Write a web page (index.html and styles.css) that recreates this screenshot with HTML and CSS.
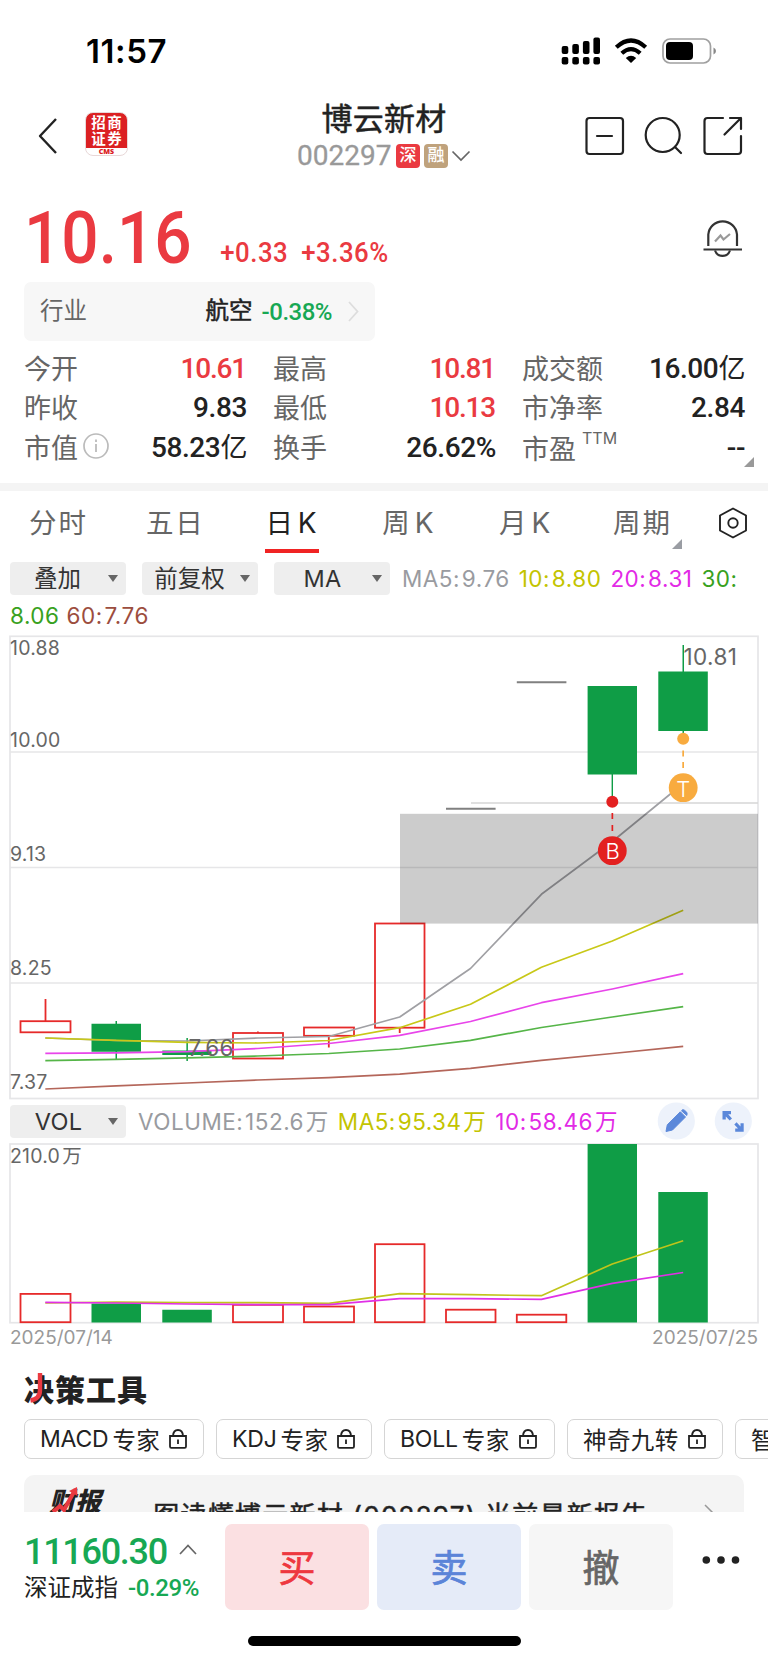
FILE: index.html
```html
<!DOCTYPE html>
<html lang="zh-CN">
<head>
<meta charset="utf-8">
<title>博云新材 002297</title>
<link rel="stylesheet" href="styles.css">
</head>
<body>
<div class="status">
  <span class="time">11:57</span>
  <svg class="status-icons" width="160" height="32" viewBox="558 34 160 32">
    <g fill="#000">
      <rect x="561.7" y="46" width="6.6" height="8" rx="2"/><rect x="572.3" y="44" width="6.6" height="10" rx="2"/><rect x="582.9" y="41" width="6.6" height="13" rx="2"/><rect x="593.4" y="37.500" width="6.600" height="16.500" rx="2"/>
      <rect x="561.7" y="57" width="6.6" height="7.500" rx="2"/><rect x="572.3" y="57" width="6.600" height="7.500" rx="2"/><rect x="582.9" y="57" width="6.600" height="7.500" rx="2"/><rect x="593.4" y="57" width="6.600" height="7.500" rx="2"/>
      <path d="M631 63L625.800 58Q631 53.500 636.200 58Z"/>
    </g>
    <g fill="none" stroke="#000" stroke-width="4.200"><path d="M616.300 47.300Q631 33.800 645.700 47.300"/><path d="M621.800 53.200Q631 45 640.200 53.200"/></g>
    <rect x="663" y="39" width="47.500" height="24" rx="7" fill="none" stroke="#a0a0a0" stroke-width="1.700"/>
    <rect x="666" y="42" width="27" height="18" rx="4"/>
    <path d="M713.500 47.500Q716 48.500 716 51T713.500 54.500Z" fill="#888"/>
  </svg>
</div>
<header class="header">
  <svg class="back" width="20" height="38" viewBox="0 0 20 38"><path d="M19 2L3 19L19 36" fill="none" stroke="#222" stroke-width="2.400" stroke-linejoin="round"/></svg>
  <div class="broker"><span>招商</span><span>证券</span><b>CMS</b></div>
  <div class="title">
    <h1>博云新材</h1>
    <div class="sub"><span class="code">002297</span><i class="badge red-bg">深</i><i class="badge tan-bg">融</i><svg width="20" height="12" viewBox="0 0 20 12"><path d="M1.500 1.500L10 10L18.500 1.500" fill="none" stroke="#666" stroke-width="1.700"/></svg></div>
  </div>
  <svg class="tools" width="160" height="42" viewBox="584 115 160 42" fill="none" stroke="#222" stroke-width="2.200" stroke-linecap="round" stroke-linejoin="round">
    <rect x="586.500" y="118" width="36.500" height="36" rx="3"/><path d="M597 136H612"/>
    <circle cx="662.700" cy="135" r="17"/><path d="M675 147L681 153"/>
    <path d="M723 118H707.500Q704.500 118 704.500 121V151Q704.500 154 707.500 154H738Q741 154 741 151V136M730 118H741V129M741 118L724.500 134.500"/>
  </svg>
</header>
<section class="quote">
  <div class="price-row">
    <span class="price">10.16</span><span class="chg">+0.33</span><span class="chg pct">+3.36%</span>
    <svg class="bell" width="40" height="42" viewBox="703 217 40 42" fill="none" stroke="#333" stroke-width="2.200"><path d="M708.300 245V233.500A14.400 14.400 0 0 1 737 233.500V245"/><path d="M703.500 248.500H742"/><path d="M715 249.500A7.900 7.900 0 0 0 730 249.500"/><path d="M715 240.500L720.500 234.500L723.500 238.500L730 233" stroke="#999" stroke-width="2.200"/></svg>
  </div>
  <div class="industry"><span>行业</span><b>航空</b><em>-0.38%</em><svg width="11" height="21" viewBox="0 0 11 21"><path d="M1 1L9.500 10.500L1 20" fill="none" stroke="#ddd" stroke-width="1.800"/></svg></div>
  <div class="stats">
    <div><span>今开</span><b class="red">10.61</b></div><div><span>最高</span><b class="red">10.81</b></div><div><span>成交额</span><b>16.00<i>亿</i></b></div>
    <div><span>昨收</span><b>9.83</b></div><div><span>最低</span><b class="red">10.13</b></div><div><span>市净率</span><b>2.84</b></div>
    <div><span class="with-info">市值<svg width="28" height="28" viewBox="0 0 28 28" fill="none" stroke="#bbb"><circle cx="14" cy="14" r="12" stroke-width="1.700"/><path d="M14 12V20M14 7.500V10" stroke-width="1.800"/></svg></span><b>58.23<i>亿</i></b></div><div><span>换手</span><b>26.62%</b></div><div><span class="pe">市盈<sup>TTM</sup></span><b>--</b></div>
    <svg class="corner" width="10" height="10"><path d="M10 0V10H0Z" fill="#999"/></svg>
  </div>
</section>
<nav class="tabs">
  <span>分时</span><span>五日</span><span class="on">日<i>K</i></span><span>周<i>K</i></span><span>月<i>K</i></span><span>周期<svg width="10" height="10"><path d="M10 0V10H0Z" fill="#9a9da3"/></svg></span>
  <svg class="gear" width="32" height="34" viewBox="0 0 32 34" fill="none" stroke="#222" stroke-width="1.900" stroke-linejoin="round"><path d="M16 2.500L29 9.500V24.500L16 31.500L3 24.500V9.500Z"/><circle cx="16" cy="17" r="4.700"/></svg>
</nav>
<div class="indicators">
  <button class="drop"><span>叠加</span></button><button class="drop"><span>前复权</span></button><button class="drop"><span class="lat">MA</span></button>
  <p><span class="c5">MA5: 9.76</span><span class="c10">10: 8.80</span><span class="c20">20: 8.31</span><span class="c30">30:</span></p>
</div>
<p class="indicators-2"><span class="c30">8.06</span><span class="c60">60: 7.76</span></p>
<svg class="chart" width="768" height="470" viewBox="0 630 768 470">
  <g fill="none" stroke="#e6e6e8" stroke-width="1.700"><rect x="10" y="636.300" width="748" height="462.200"/><path d="M10 752H758M10 867.500H758M10 983H758"/></g>
  <g class="axis"><text x="10" y="655">10.88</text><text x="10" y="747">10.00</text><text x="10" y="860.500">9.13</text><text x="10" y="975">8.25</text><text x="10" y="1089">7.37</text></g>
  <g fill="none" stroke="#e62a2a" stroke-width="1.800">
    <path d="M45.500 999V1021M328.800 1036V1047.500M399.700 1028V1033M257.900 1031.500V1033"/>
    <rect x="20.500" y="1021.200" width="50" height="11.100"/><rect x="233" y="1033" width="50" height="25.500"/><rect x="304" y="1027.500" width="50" height="8.300"/><rect x="375" y="923.500" width="49.500" height="104.200"/>
  </g>
  <g fill="#0f9d46"><path d="M91.500 1023.800H141V1051.800H91.500ZM115.500 1021H117V1059H115.500ZM162.300 1050.500H211.500V1055H162.300ZM186.400 1038H187.900V1061H186.400ZM587.600 686H637V774.500H587.600ZM611.600 774H613V797H611.600ZM658.300 671.600H707.800V731H658.300ZM682.500 645H684V735H682.500Z"/></g>
  <path d="M446 808.800H495.600M516.800 682.300H566.400" stroke="#808080" stroke-width="2"/>
  <path d="M471 803H758" stroke="#d6d6d6" stroke-width="1.700"/>
  <g fill="none" stroke-width="1.700" stroke-linejoin="round">
    <polyline stroke="#a0a0a4" points="45.300,1038 116.200,1040.500 187.100,1041 257.900,1038 328.800,1036.500 399.700,1017 470.500,968.500 541.400,894.300 612.300,841.500 683.200,783.500"/>
    <polyline stroke="#c8c818" points="45.300,1038 116.200,1040.300 187.100,1042.300 257.900,1043 328.800,1040.500 399.700,1027.700 470.500,1004.300 541.400,967.300 612.300,941 683.200,910.200"/>
    <polyline stroke="#e845ea" points="45.300,1053.400 116.200,1052.800 187.100,1051.700 257.900,1048.500 328.800,1043.500 399.700,1035.300 470.500,1021.500 541.400,1002.700 612.300,989 683.200,973.700"/>
    <polyline stroke="#55b548" points="45.300,1060.700 116.200,1059.300 187.100,1057.800 257.900,1056 328.800,1053.500 399.700,1049 470.500,1040.300 541.400,1027.500 612.300,1017 683.200,1006.700"/>
    <polyline stroke="#b4665a" points="45.300,1089 116.200,1085.800 187.100,1083 257.900,1080 328.800,1077.700 399.700,1074.200 470.500,1068.300 541.400,1060.300 612.300,1053.500 683.200,1046.300"/>
  </g>
  <rect x="400" y="813.800" width="358" height="109.800" fill="#000" fill-opacity=".2"/>
  <g class="tag"><text x="683.500" y="664.500">10.81</text><text x="188.500" y="1055.500">7.66</text></g>
  <g fill="#e32020"><circle cx="612.300" cy="801.700" r="6"/><circle cx="612.300" cy="850.700" r="14.400"/><path d="M611.500 813H613.200V819H611.500ZM611.500 825H613.200V831H611.500Z"/></g>
  <g fill="#f8ab3f"><circle cx="683.200" cy="738.800" r="6"/><circle cx="683.200" cy="787.700" r="14.400"/><path d="M682.300 750.500H684V756.500H682.300ZM682.300 762H684V768H682.300Z"/></g>
  <g class="mark"><text x="612.600" y="859">B</text><text x="683.200" y="796.500">T</text></g>
</svg>
<div class="indicators vol">
  <button class="drop"><span class="lat">VOL</span></button>
  <p><span class="c5">VOLUME: 152.6 万</span><span class="c10">MA5: 95.34 万</span><span class="c20">10: 58.46 万</span></p>
  <svg class="vol-tools" width="96" height="38" viewBox="657 1102 96 38"><g fill="#edf2fb"><circle cx="676.300" cy="1121" r="18.600"/><circle cx="733.300" cy="1121" r="18.600"/></g>
    <g fill="#5b88da"><path d="M666 1131.500L667.300 1124.800L680.300 1111.800L685.500 1117L672.500 1130ZM681.500 1110.800L682.800 1109.600Q684.200 1109.600 686.700 1112.200Q687.500 1113.500 686.800 1115.500Z" stroke="#5b88da" stroke-width="1" stroke-linejoin="round"/><path d="M722.500 1111H731V1114.200H728.200L732 1118.500L729.700 1120.600L725.800 1116.500V1119.500H722.500ZM743.700 1131.800H735.200V1128.600H738L734.300 1124.400L736.600 1122.300L740.500 1126.400V1123.300H743.700Z"/></g></svg>
</div>
<svg class="chart" width="768" height="186" viewBox="0 1140 768 186">
  <rect x="10" y="1144" width="748" height="178.700" fill="none" stroke="#e6e6e8" stroke-width="1.700"/>
  <g class="axis"><text class="tight" x="10" y="1162.500">210.0 万</text></g>
  <g fill="none" stroke="#e62a2a" stroke-width="1.800"><rect x="20.500" y="1293.900" width="50" height="28.300"/><rect x="233" y="1304.800" width="50" height="17.400"/><rect x="304" y="1306.500" width="50" height="15.700"/><rect x="375" y="1244.200" width="49.500" height="78"/><rect x="446" y="1309.700" width="49.500" height="12.500"/><rect x="516.800" y="1314.700" width="49.500" height="7.500"/></g>
  <path d="M91.500 1303.500H141V1322.500H91.500ZM162.300 1309.800H211.800V1322.500H162.300ZM587.600 1144H637V1322.500H587.600ZM658.300 1192H707.800V1322.500H658.300Z" fill="#0f9d46"/>
  <g fill="none" stroke-width="1.700" stroke-linejoin="round">
    <polyline stroke="#c0c51b" points="45.300,1303 116.200,1302 187.100,1302.700 257.900,1302.700 328.800,1303.300 399.700,1293.700 470.500,1294.700 541.400,1295.700 612.300,1264 683.200,1240.700"/>
    <polyline stroke="#e030e6" points="45.300,1302.400 116.200,1303 187.100,1304 257.900,1304.700 328.800,1304.700 399.700,1298.700 470.500,1298.700 541.400,1299.300 612.300,1283.300 683.200,1272.500"/>
  </g>
</svg>
<div class="dates"><span>2025/07/14</span><span>2025/07/25</span></div>
<section class="decision">
  <h2>决策工具<svg width="20" height="32" viewBox="0 0 20 32"><path d="M10 1V18Q10 27 0.500 28.500" fill="none" stroke="#ea3a41" stroke-width="4.400"/></svg></h2>
  <div class="chips">
    <span class="chip w1"><i>MACD</i>专家<svg class="lock" viewBox="0 0 18 20"><path d="M1 7H17V17.500Q17 18.800 15.700 18.800H2.300Q1 18.800 1 17.500ZM4 7Q4.300 1 9 1T14 7M9 10.500V15"/></svg></span>
    <span class="chip w2"><i>KDJ</i>专家<svg class="lock" viewBox="0 0 18 20"><path d="M1 7H17V17.500Q17 18.800 15.700 18.800H2.300Q1 18.800 1 17.500ZM4 7Q4.300 1 9 1T14 7M9 10.500V15"/></svg></span>
    <span class="chip w3"><i>BOLL</i>专家<svg class="lock" viewBox="0 0 18 20"><path d="M1 7H17V17.500Q17 18.800 15.700 18.800H2.300Q1 18.800 1 17.500ZM4 7Q4.300 1 9 1T14 7M9 10.500V15"/></svg></span>
    <span class="chip w4">神奇九转<svg class="lock" viewBox="0 0 18 20"><path d="M1 7H17V17.500Q17 18.800 15.700 18.800H2.300Q1 18.800 1 17.500ZM4 7Q4.300 1 9 1T14 7M9 10.500V15"/></svg></span>
    <span class="chip w5">智</span>
  </div>
  <div class="report">
    <div class="report-logo">财报<svg width="28" height="28" viewBox="0 0 28 28"><path d="M2 25L9 19L13 23L24 3" fill="none" stroke="#ea3a41" stroke-width="4"/><path d="M18 4L26 0L26.500 9Z" fill="#ea3a41"/></svg></div>
    <p>一图读懂博云新材 (002297) 当前最新报告</p>
    <svg width="10" height="18" viewBox="0 0 10 18"><path d="M1 1L9 9L1 17" fill="none" stroke="#999" stroke-width="1.500"/></svg>
  </div>
</section>
<footer class="bar">
  <div class="index">
    <div class="index-top"><span>11160.30</span><svg width="18" height="11" viewBox="0 0 18 11"><path d="M1 10L9 1.500L17 10" fill="none" stroke="#666" stroke-width="1.700"/></svg></div>
    <div class="index-sub">深证成指<em>-0.29%</em></div>
  </div>
  <button class="act buy">买</button><button class="act sell">卖</button><button class="act cancel">撤</button>
  <svg class="more" width="38" height="10" viewBox="0 0 38 10" fill="#222"><circle cx="4.300" cy="5" r="3.800"/><circle cx="19" cy="5" r="3.800"/><circle cx="33.500" cy="5" r="3.800"/></svg>
</footer>
<div class="home"></div>
</body>
</html>
```
FILE: styles.css
```css
* { box-sizing: border-box; }
body { margin: 0; width: 768px; height: 1663px; overflow: hidden; background: #fff; color: #222; font-family: "Inter", "Noto Sans CJK SC", sans-serif; display: flex; flex-direction: column; }
body > * { flex: none; }
h1, h2, p { margin: 0; }
i, em { font-style: normal; }
svg { display: block; flex: none; }
button { border: 0; margin: 0; padding: 0; }
.red { color: #ea3a41; }

.status { height: 100px; display: flex; justify-content: space-between; padding: 34px 50px 0 86px; }
.time { font-weight: 600; font-size: 33px; line-height: 34px; color: #000; letter-spacing: 0.6px; }

.header { height: 96px; display: flex; align-items: flex-start; padding-left: 37px; }
.back { margin-top: 17px; }
.broker { margin: 12px 0 0 28px; width: 43px; height: 44px; border-radius: 8px; border: 1px solid #e8d8d8; background: linear-gradient(#db2022 0 35px, #fff 35px); color: #fff; display: flex; flex-direction: column; align-items: center; padding-top: 2px; font-weight: 700; }
.broker span { font-size: 14.500px; line-height: 16px; letter-spacing: 1.500px; margin-right: -1.500px; }
.broker b { color: #db2022; font-size: 7px; line-height: 8px; margin-top: 1px; font-family: "Open Sans", sans-serif; font-weight: 800; }
.title { margin-left: 168px; width: 176px; display: flex; flex-direction: column; align-items: center; }
.title h1 { font-size: 31px; line-height: 34px; font-weight: 400; -webkit-text-stroke: 0.5px #222; font-family: "Noto Sans CJK SC", sans-serif; letter-spacing: 0.300px; }
.sub { display: flex; align-items: center; height: 24px; margin-top: 10px; }
.code { font-family: Roboto, sans-serif; font-size: 28px; line-height: 24px; color: #999; width: 98px; -webkit-text-stroke: 0.300px #999; }
.badge { width: 24px; height: 24px; border-radius: 4px; color: #fff; font-size: 17px; line-height: 23px; text-align: center; font-weight: 500; margin-right: 4px; position: relative; left: 1px; }
.red-bg { background: #ea3a41; }
.tan-bg { background: #bfa27c; }
.tools { margin: 15px 0 0 112px; }

.quote { height: 287px; padding: 0 24px; }
.price-row { height: 86px; display: flex; align-items: baseline; position: relative; font-family: Roboto, sans-serif; color: #ea3a41; font-weight: 500; }
.price { font-size: 73px; line-height: 84px; letter-spacing: 0; width: 196px; transform: scaleX(0.900); transform-origin: 0 50%; }
.chg { font-size: 28px; letter-spacing: 0.600px; width: 81px; transform: scaleX(0.920) translateY(-1px); transform-origin: 2px 50%; }
.bell { position: absolute; right: 1px; top: 22px; }
.industry { width: 351px; height: 59px; background: #f7f7f7; border-radius: 7px; padding: 0 16px; display: flex; align-items: center; font-size: 23.5px; line-height: 32px; color: #666; }
.industry span, .industry b { position: relative; top: -1px; }
.industry b { margin-left: auto; font-weight: 400; -webkit-text-stroke: 0.500px #222; color: #222; }
.industry em { margin: 0 16px 0 9px; font: 500 24px Roboto, sans-serif; letter-spacing: -0.500px; color: #17a854; }
.stats { position: relative; margin-top: 8px; display: grid; grid-template-columns: 223px 223px 223px; column-gap: 26px; grid-auto-rows: 39.300px; }
.stats div { display: flex; align-items: center; justify-content: space-between; font-size: 27px; color: #666; }
.stats div > span { position: relative; top: -1px; }
.stats b { font: 500 28px Roboto, "Noto Sans CJK SC", sans-serif; color: #222; letter-spacing: -0.400px; }
.stats b.red { color: #ea3a41; letter-spacing: -1.200px; padding-right: 1px; }
.stats b i { font-size: 27px; font-weight: 400; line-height: 30px; }
.with-info { display: flex; align-items: center; gap: 4px; }
.stats div > .pe { top: 0; }
.stats sup { font-size: 16px; vertical-align: 15px; line-height: 0; margin-left: 6px; }
.corner { position: absolute; left: 720px; top: 108px; }

.tabs { height: 79px; border-top: 8px solid #f4f4f4; display: flex; }
.tabs span { position: relative; width: 116.800px; padding-top: 12px; text-align: center; font-size: 27.500px; line-height: 40px; letter-spacing: 1.800px; color: #666; }
.tabs i { margin-left: 3px; font-size: 28px; }
.tabs .on { color: #222; }
.tabs .on::after { content: ""; position: absolute; left: 31px; bottom: 9px; width: 54px; height: 4px; background: #f02323; }
.tabs span svg { position: absolute; right: 19px; top: 48px; }
.gear { margin: 15px 0 0 16.500px; }

.indicators { height: 33px; display: flex; padding-left: 10px; gap: 16px; align-items: center; font-size: 22.500px; position: relative; }
.drop { width: 116px; height: 33px; border-radius: 4px; background: #eee; font: 23.500px/33px "Inter", "Noto Sans CJK SC", sans-serif; color: #333; display: flex; align-items: center; justify-content: space-between; padding: 0 8px 0 0; }
.drop span { flex: 1; text-align: center; padding-right: 3px; }
.drop .lat { padding-right: 1px; letter-spacing: 0.300px; }
.drop::after { content: ""; border: 5px solid transparent; border-top: 7px solid #666; border-bottom: 0; }
.indicators p { margin-left: -4px; display: flex; white-space: nowrap; gap: 9px; line-height: 33px; letter-spacing: 0.500px; word-spacing: -5px; }
.indicators-2 { padding-left: 10px; height: 35px; line-height: 41px; font-size: 22.500px; display: flex; gap: 7px; letter-spacing: 0.500px; word-spacing: -5px; }
.c5 { color: #999ba0; } .c10 { color: #c3c400; } .c20 { color: #e22ae6; } .c30 { color: #38a120; } .c60 { color: #9c4d3e; }
.axis { font-size: 19.500px; fill: #666; letter-spacing: 0.200px; }
.tight { word-spacing: -3.500px; }
.tag { font-size: 22.500px; fill: #666; letter-spacing: 0.400px; }
.mark { font-size: 22px; font-weight: 300; fill: #fff; text-anchor: middle; }
.vol { margin-top: 5px; height: 33px; }
.vol-tools { position: absolute; left: 657px; top: -3px; }
.vol + .chart { margin-top: 2px; }
.dates { display: flex; justify-content: space-between; padding: 0 10px; font-size: 19px; line-height: 23px; color: #999; height: 22px; }

.decision { height: 164px; padding: 22px 24px 0; overflow: hidden; }
.decision h2 { position: relative; font: 900 30px/36px "Noto Sans CJK SC", sans-serif; letter-spacing: 1px; }
.decision h2 svg { position: absolute; left: 6px; top: 2px; }
.chips { display: flex; gap: 12px; margin-top: 13px; }
.chip { flex: none; height: 40px; border: 1.500px solid #d5d5d5; border-radius: 7px; padding-left: 15px; display: flex; align-items: center; font-size: 23.500px; letter-spacing: 0.400px; }
.chip i { margin-right: 4px; font-size: 23px; letter-spacing: -0.200px; }
.w1 { width: 180px; } .w2 { width: 156px; } .w3 { width: 171px; } .w4 { width: 156px; } .w5 { width: 100px; }
.lock { width: 18px; height: 20px; margin-left: 9px; fill: none; stroke: #222; stroke-width: 1.800; }
.report { margin-top: 16px; height: 76px; border-radius: 10px; background: #f4f4f4; display: flex; padding-left: 25px; }
.report-logo { position: relative; font: italic 900 26px/30px "Noto Sans CJK SC", sans-serif; margin-top: 10px; width: 77px; }
.report-logo svg { position: absolute; left: 2px; top: 2px; }
.report p { font-size: 26px; font-weight: 400; -webkit-text-stroke: 0.500px #222; line-height: 38px; margin-top: 22px; width: 527px; white-space: nowrap; letter-spacing: 1.250px; }
.report > svg { margin: 29px 0 0 51px; }

.bar { height: 98px; padding: 12px 0 0 24px; display: flex; background: #fff; }
.index { width: 201px; }
.index-top { display: flex; align-items: center; height: 50px; font: 500 36px/50px Roboto, sans-serif; color: #17a854; }
.index-top span { width: 155px; letter-spacing: -1.300px; padding-top: 5px; }
.index-sub { font-size: 23.500px; line-height: 28px; white-space: nowrap; }
.index-sub em { margin-left: 10px; font: 500 24px Roboto, sans-serif; letter-spacing: -0.400px; color: #17a854; }
.act { width: 144px; height: 86px; border-radius: 7px; margin-right: 8px; font: 400 37px/84px "Noto Sans CJK SC", sans-serif; -webkit-text-stroke: 0.700px currentColor; padding-bottom: 3px; }
.buy { background: #fbe0e2; color: #ee383f; }
.sell { background: #e5ebf8; color: #5b84d8; }
.cancel { background: #f6f6f6; color: #666; }
.more { margin: 31px 0 0 21px; }
.home { margin: 26px 0 0 248px; width: 273px; height: 10px; border-radius: 5px; background: #000; }
```
